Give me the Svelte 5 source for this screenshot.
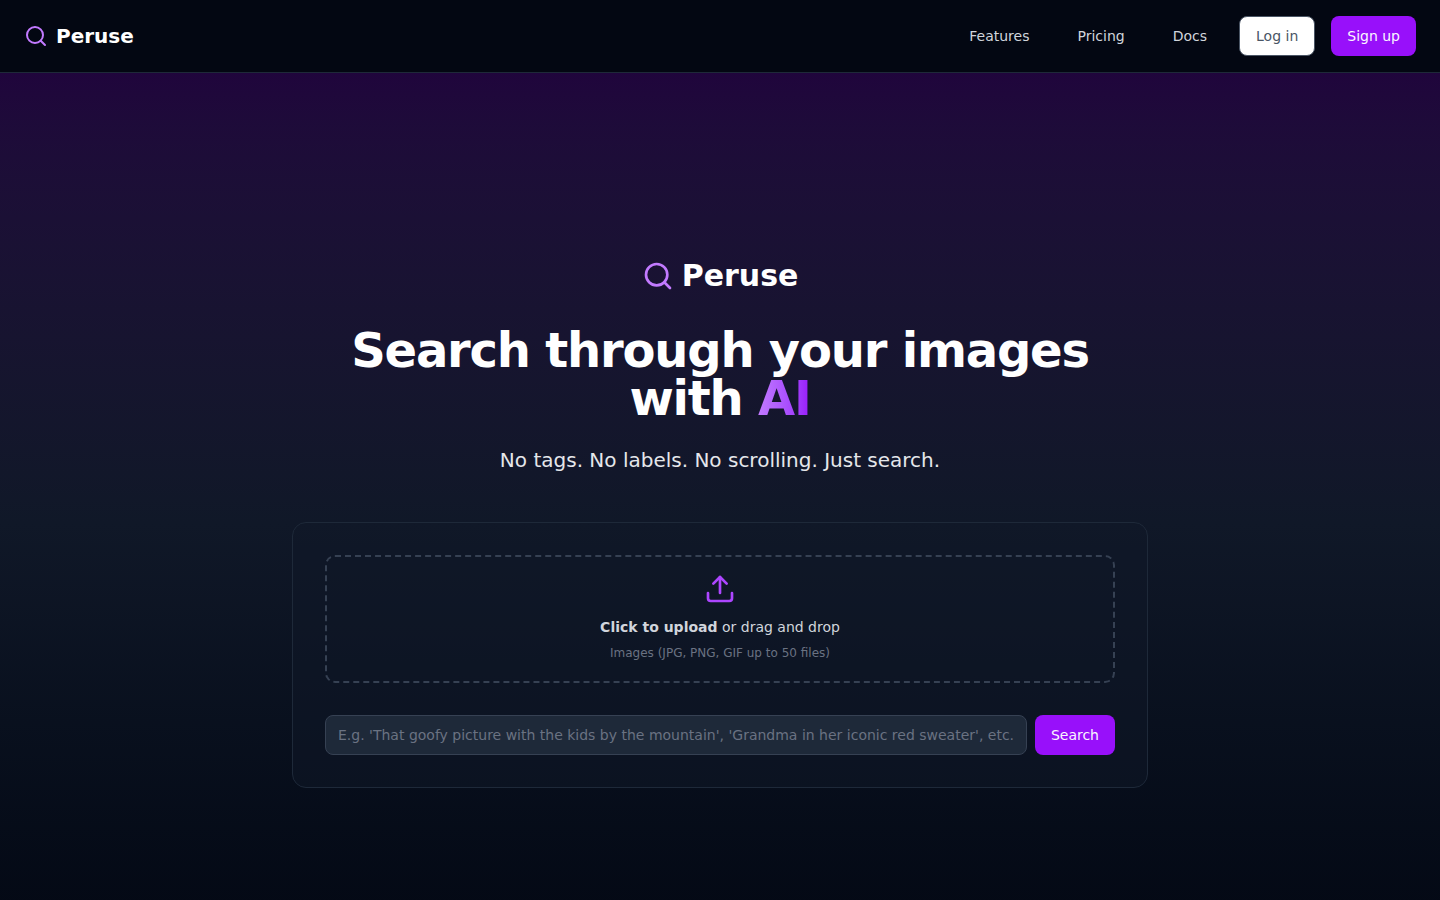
<script>
  let query = $state('');
</script>

{#snippet magnifier()}
  <svg class="magnifier" viewBox="0 0 24 24" fill="none" stroke="currentColor" stroke-width="2" stroke-linecap="round" stroke-linejoin="round" aria-hidden="true">
    <circle cx="11" cy="11" r="8" />
    <path d="m21 21-4.3-4.3" />
  </svg>
{/snippet}

<header>
  <a class="brand" href="#home">{@render magnifier()}<span>Peruse</span></a>
  <nav>
    <a href="#features">Features</a>
    <a href="#pricing">Pricing</a>
    <a href="#docs">Docs</a>
  </nav>
  <div class="actions">
    <button class="button outline" type="button">Log in</button>
    <button class="button" type="button">Sign up</button>
  </div>
</header>

<main>
  <div class="content">
    <div class="brand large">{@render magnifier()}<span>Peruse</span></div>
    <h1>Search through your images with <span class="accent">AI</span></h1>
    <p class="lead">No tags. No labels. No scrolling. Just search.</p>

    <form class="card" onsubmit={(event) => event.preventDefault()}>
      <label class="drop">
        <svg class="upload" viewBox="0 0 24 24" fill="none" stroke="currentColor" stroke-width="2" stroke-linecap="round" stroke-linejoin="round" aria-hidden="true">
          <path d="M21 15v4a2 2 0 0 1-2 2H5a2 2 0 0 1-2-2v-4" />
          <polyline points="17 8 12 3 7 8" />
          <line x1="12" x2="12" y1="3" y2="15" />
        </svg>
        <span class="prompt"><strong>Click to upload</strong> or drag and drop</span>
        <span class="hint">Images (JPG, PNG, GIF up to 50 files)</span>
        <input type="file" accept="image/*" multiple />
      </label>
      <div class="search">
        <input
          type="text"
          aria-label="Search images"
          placeholder="E.g. 'That goofy picture with the kids by the mountain', 'Grandma in her iconic red sweater', etc."
          bind:value={query}
        />
        <button class="button" type="submit">Search</button>
      </div>
    </form>
  </div>
</main>

<style>
  :global(body) {
    margin: 0;
    background: #030712;
    color: #fff;
    font-family: "DejaVu Sans", sans-serif;
    font-size: 14px;
    line-height: 20px;
  }

  header,
  main,
  .content,
  .card,
  .drop,
  .search input,
  .button {
    box-sizing: border-box;
  }

  a {
    color: inherit;
    text-decoration: none;
  }

  header {
    display: flex;
    align-items: center;
    padding: 16px 24px;
    border-bottom: 1px solid #1e2939;
    background: #030712;
  }

  .brand {
    display: flex;
    align-items: center;
    gap: 8px;
    font-size: 20px;
    line-height: 28px;
    font-weight: 700;
  }

  .magnifier {
    width: 24px;
    height: 24px;
    color: #c27aff;
  }

  nav {
    display: flex;
    gap: 48px;
    margin-left: auto;
    margin-right: 32px;
    color: #d1d5dc;
  }

  .actions {
    display: flex;
    gap: 16px;
  }

  .button {
    height: 40px;
    padding: 0 16px;
    border: 0;
    border-radius: 8px;
    background: #9810fa;
    color: #faf5ff;
    font: inherit;
    cursor: pointer;
  }

  .outline {
    border: 1px solid #4a5565;
    background: #fff;
    color: #4a5565;
  }

  main {
    display: flex;
    align-items: center;
    justify-content: center;
    min-height: 100vh;
    padding: 64px 24px;
    background: linear-gradient(to bottom in oklab, rgb(60 3 102 / 0.5), #101828 50%, #030712) #030712;
  }

  .content {
    width: 100%;
    max-width: 856px;
    text-align: center;
  }

  .large {
    justify-content: center;
    font-size: 30px;
    line-height: 36px;
  }

  .large .magnifier {
    width: 32px;
    height: 32px;
  }

  h1 {
    margin: 32px 0 24px;
    padding: 0 44px;
    font-size: 48px;
    line-height: 48px;
    font-weight: 700;
    letter-spacing: -0.025em;
  }

  .accent {
    background: linear-gradient(to right in oklab, #c27aff, #9810fa);
    background-clip: text;
    color: transparent;
  }

  .lead {
    margin: 0 0 48px;
    color: #e5e7eb;
    font-size: 20px;
    line-height: 28px;
  }

  .card {
    display: flex;
    flex-direction: column;
    gap: 32px;
    padding: 32px;
    border: 1px solid #1e2939;
    border-radius: 14px;
    background: rgb(16 24 40 / 0.5);
  }

  .drop {
    position: relative;
    display: flex;
    flex-direction: column;
    align-items: center;
    min-height: 128px;
    padding: 16px;
    border: 2px dashed #364153;
    border-radius: 10px;
    cursor: pointer;
  }

  .drop input {
    position: absolute;
    inset: 0;
    opacity: 0;
  }

  .upload {
    width: 32px;
    height: 32px;
    margin-bottom: 12px;
    color: #ad46ff;
  }

  .prompt {
    margin-bottom: 8px;
    color: #d1d5dc;
  }

  .hint {
    color: #6a7282;
    font-size: 12px;
    line-height: 16px;
  }

  .search {
    display: flex;
    gap: 8px;
  }

  .search input {
    flex: 1;
    min-width: 0;
    height: 40px;
    padding: 0 12px;
    border: 1px solid #364153;
    border-radius: 8px;
    background: #1e2939;
    color: #fff;
    font: inherit;
  }

  .search input::placeholder {
    color: #6a7282;
  }
</style>
